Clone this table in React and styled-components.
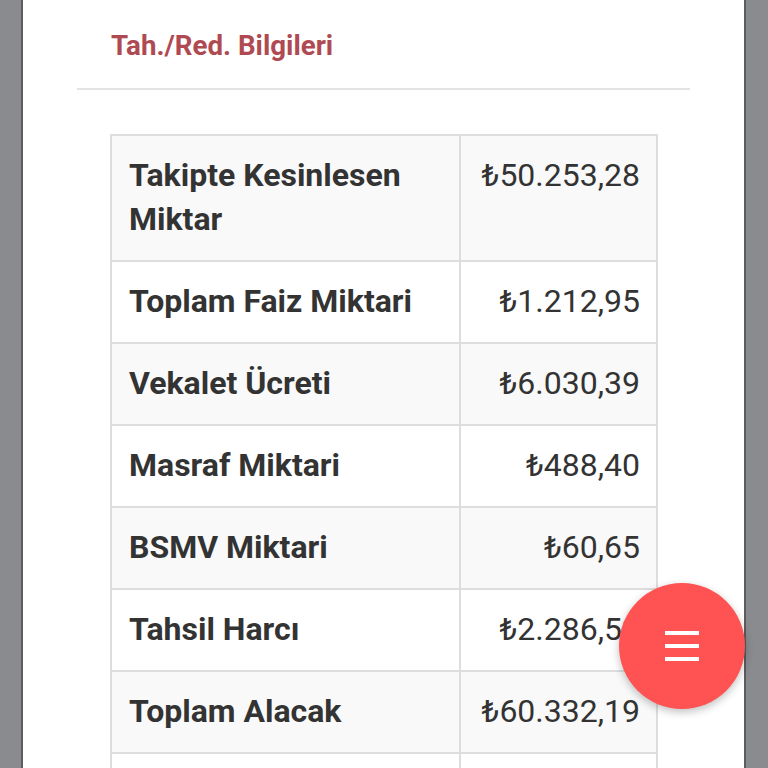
import React from 'react';
import styled, { createGlobalStyle } from 'styled-components';

const GlobalStyle = createGlobalStyle`
  html, body {
    margin: 0;
    padding: 0;
    overflow: hidden;
    background: #8a8b8f;
  }
  body {
    font-family: Roboto, "Liberation Sans", sans-serif;
    color: #333;
  }
`;

const Page = styled.div`
  display: flex;
  padding: 0 24px 0 23px;
  min-height: 768px;
`;

const Card = styled.div`
  flex: 1;
  background: #fff;
  box-shadow: -2px 0 0 #5c5d60, 2px 0 0 #5c5d60;
`;

const Title = styled.h3`
  margin: 0;
  padding: 29px 88px 25px;
  font-size: 27.7px;
  line-height: 34px;
  font-weight: 700;
  color: #b04a52;
`;

const Divider = styled.hr`
  margin: 0 54px;
  border: 0;
  border-top: 2px solid #e3e3e3;
`;

const Body = styled.div`
  padding: 44px 86px 0 87px;
`;

const Table = styled.table`
  width: 100%;
  border-collapse: collapse;
  border: 2px solid #ddd;
`;

const Row = styled.tr`
  background: ${({ $striped }) => ($striped ? '#f9f9f9' : '#fff')};
`;

const Label = styled.td`
  width: 64%;
  padding: 17px 16px 19px 17px;
  border: 2px solid #ddd;
  font-size: 32px;
  line-height: 44px;
  font-weight: 700;
  vertical-align: top;
`;

const Value = styled.td`
  padding: 17px 16px 19px;
  border: 2px solid #ddd;
  font-size: 32px;
  line-height: 44px;
  text-align: right;
  vertical-align: top;
  white-space: nowrap;
`;

const Fab = styled.button`
  position: fixed;
  right: 23px;
  bottom: 59px;
  width: 126px;
  height: 126px;
  border: 0;
  border-radius: 50%;
  background: #ff5252;
  box-shadow: 0 3px 8px rgba(0, 0, 0, 0.25);
  display: flex;
  flex-direction: column;
  align-items: center;
  justify-content: center;
  gap: 9px;
  padding: 0;
`;

const Bar = styled.span`
  display: block;
  width: 34px;
  height: 4px;
  background: #fff;
`;

const rows = [
  ['Takipte Kesinlesen Miktar', '₺50.253,28'],
  ['Toplam Faiz Miktari', '₺1.212,95'],
  ['Vekalet Ücreti', '₺6.030,39'],
  ['Masraf Miktari', '₺488,40'],
  ['BSMV Miktari', '₺60,65'],
  ['Tahsil Harcı', '₺2.286,52'],
  ['Toplam Alacak', '₺60.332,19'],
  ['Tahsil Edilen', '₺0,00'],
];

export default function App() {
  return <>
    <GlobalStyle />
    <Page>
      <Card>
        <Title>Tah./Red. Bilgileri</Title>
        <Divider />
        <Body>
          <Table>
            <tbody>
              {rows.map(([label, value], i) => (
                <Row key={label} $striped={i % 2 === 0}>
                  <Label>{label}</Label>
                  <Value>{value}</Value>
                </Row>
              ))}
            </tbody>
          </Table>
        </Body>
      </Card>
    </Page>
    <Fab aria-label="menu">
      <Bar />
      <Bar />
      <Bar />
    </Fab>
  </>;
}
